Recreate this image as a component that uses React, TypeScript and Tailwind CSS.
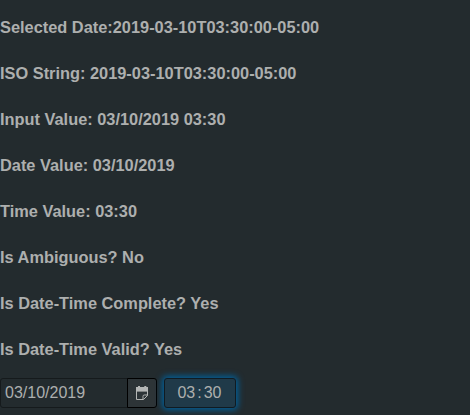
const rows: string[] = [
  'Selected Date:2019-03-10T03:30:00-05:00',
  'ISO String: 2019-03-10T03:30:00-05:00',
  'Input Value: 03/10/2019 03:30',
  'Date Value: 03/10/2019',
  'Time Value: 03:30',
  'Is Ambiguous? No',
  'Is Date-Time Complete? Yes',
  'Is Date-Time Valid? Yes',
];

function CalendarIcon() {
  return (
    <svg width="14" height="16" viewBox="0 0 14 16" className="text-[#b4b6b5]" fill="none">
      <path d="M1 2h12v4.6H1z" fill="currentColor" />
      <path d="M3 1h2v2H3zM9.3 1h2v2h-2z" fill="currentColor" />
      <path d="M1.5 6v8.5h7l4-4V6" stroke="currentColor" />
      <path d="M8 14.5v-3.2q0-1.3 1.3-1.3h3.7" stroke="currentColor" />
    </svg>
  );
}

export default function App() {
  return (
    <main className="flex h-[415px] w-[470px] flex-col overflow-hidden bg-[#232b2e] font-['Liberation_Sans',Arial,sans-serif] text-base text-[#adafae]">
      <div className="flex flex-col pt-1">
        {rows.map((row) => (
          <p key={row} className="h-[46px] whitespace-nowrap text-[16.38px] font-bold leading-[46px]">
            {row}
          </p>
        ))}
      </div>
      <div className="flex pt-[6px]">
        <div className="flex h-[30px] w-32 items-center rounded-l-[3px] border border-[#151a1c] bg-[#232b2e] pl-1">
          03/10/2019
        </div>
        <button className="-ml-px flex h-[30px] w-[30px] items-center justify-center rounded-r-[3px] border border-black bg-[#2d3437]">
          <CalendarIcon />
        </button>
        <div className="ml-[7px] flex h-[30px] w-[72px] items-center justify-center gap-[2px] rounded-[3px] border border-[#101b22] bg-[#203a49] pr-px shadow-[0_0_6px_2px_#00609a]">
          <span>03</span>
          <span>:</span>
          <span>30</span>
        </div>
      </div>
    </main>
  );
}
